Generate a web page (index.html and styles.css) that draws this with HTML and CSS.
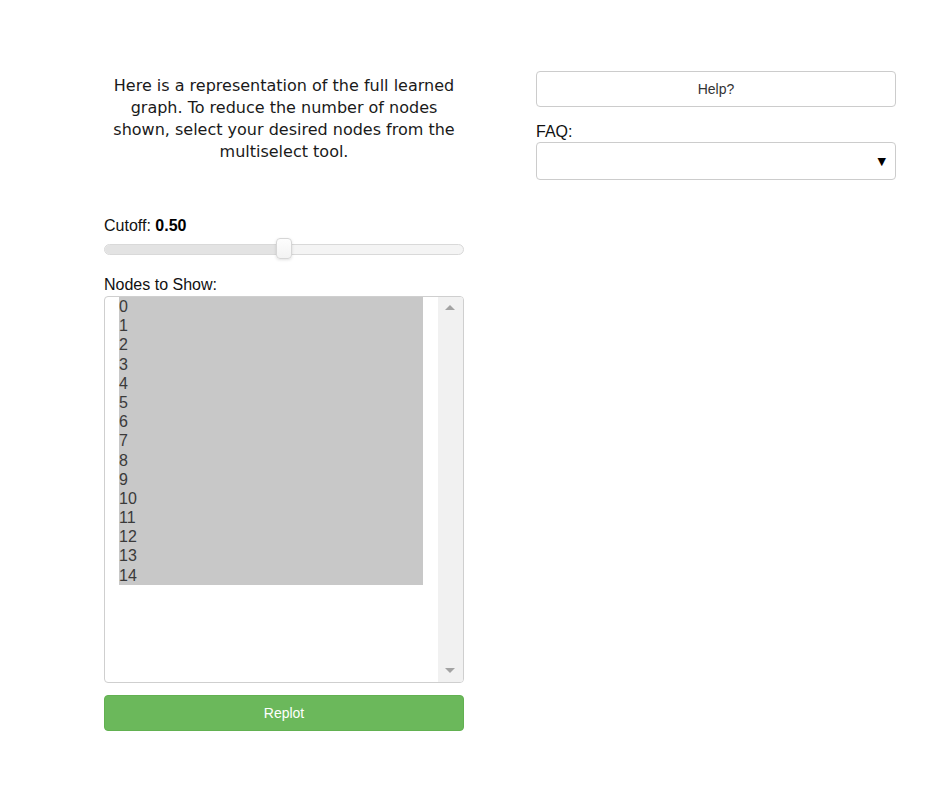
FILE: index.html
```html
<!DOCTYPE html>
<html>
<head>
<meta charset="utf-8">
<link rel="stylesheet" href="styles.css">
</head>
<body>
<div class="page">
  <div class="col left">
    <p class="desc">Here is a representation of the full learned graph. To reduce the number of nodes shown, select your desired nodes from the multiselect tool.</p>
    <div class="label cutoff">Cutoff: <b>0.50</b></div>
    <div class="slider">
      <div class="track"><div class="fill"></div></div>
      <div class="thumb"></div>
    </div>
    <div class="label nodes">Nodes to Show:</div>
    <div class="listbox">
      <div class="options">
        <div class="opt">0</div><div class="opt">1</div><div class="opt">2</div><div class="opt">3</div><div class="opt">4</div>
        <div class="opt">5</div><div class="opt">6</div><div class="opt">7</div><div class="opt">8</div><div class="opt">9</div>
        <div class="opt">10</div><div class="opt">11</div><div class="opt">12</div><div class="opt">13</div><div class="opt">14</div>
      </div>
      <div class="scrollbar">
        <span class="arrow up"></span>
        <span class="arrow down"></span>
      </div>
    </div>
    <button class="btn replot">Replot</button>
  </div>
  <div class="col right">
    <button class="btn help">Help?</button>
    <div class="label faq">FAQ:</div>
    <div class="select"><span class="caret">▼</span></div>
  </div>
</div>
</body>
</html>
```
FILE: styles.css
```css
html, body {
  margin: 0;
  padding: 0;
  background: #fff;
}
.page {
  display: flex;
  gap: 72px;
  padding: 71px 0 0 104px;
  font-family: "Liberation Sans", Arial, sans-serif;
  color: #222;
}
.col {
  width: 360px;
  display: flex;
  flex-direction: column;
}
.desc {
  margin: 4px 0 0;
  font-family: "DejaVu Sans", Verdana, sans-serif;
  font-size: 16px;
  line-height: 22px;
  text-align: center;
  color: #1a1a1a;
  padding: 0 4px;
}
.label {
  font-size: 16px;
  line-height: 18px;
  color: #111;
}
.cutoff {
  margin-top: 54px;
}
.cutoff b {
  font-weight: bold;
  color: #000;
}
.slider {
  position: relative;
  height: 21px;
  margin-top: 3px;
  display: flex;
  align-items: center;
}
.track {
  width: 100%;
  height: 11px;
  box-sizing: border-box;
  border: 1px solid #d9d9d9;
  border-radius: 6px;
  background: #f4f4f4;
  overflow: hidden;
  margin-top: 1px;
}
.fill {
  width: 50%;
  height: 100%;
  background: #e3e3e3;
}
.thumb {
  position: absolute;
  left: 172px;
  top: 0;
  width: 16px;
  height: 21px;
  box-sizing: border-box;
  border: 1px solid #d6d6d6;
  border-radius: 4px;
  background: linear-gradient(#fdfdfd, #f3f3f3);
  box-shadow: 0 1px 3px rgba(0,0,0,0.12);
}
.nodes {
  margin-top: 17px;
}
.listbox {
  margin-top: 2px;
  height: 387px;
  box-sizing: border-box;
  border: 1px solid #cfcfcf;
  border-radius: 4px;
  display: flex;
  overflow: hidden;
}
.options {
  flex: 1;
  padding: 0 15px 0 14px;
}
.opt {
  background: #c8c8c8;
  font-size: 16px;
  line-height: 19.2px;
  height: 19.2px;
  color: #3a3a3a;
}
.scrollbar {
  width: 25px;
  background: #f1f1f1;
  position: relative;
}
.arrow {
  position: absolute;
  left: 7px;
  width: 0;
  height: 0;
  border-left: 5px solid transparent;
  border-right: 5px solid transparent;
}
.arrow.up {
  top: 8px;
  border-bottom: 5px solid #a3a3a3;
}
.arrow.down {
  bottom: 9px;
  border-top: 5px solid #a3a3a3;
}
.btn {
  font-family: "Liberation Sans", Arial, sans-serif;
  font-size: 14px;
  height: 36px;
  border-radius: 4px;
  box-sizing: border-box;
  width: 100%;
  padding: 0;
  cursor: pointer;
}
.replot {
  margin-top: 12px;
  background: #6bb85b;
  border: 1px solid #62b151;
  color: #fff;
}
.help {
  background: #fff;
  border: 1px solid #cccccc;
  color: #333;
}
.faq {
  margin-top: 16px;
}
.select {
  margin-top: 1px;
  height: 38px;
  box-sizing: border-box;
  border: 1px solid #cccccc;
  border-radius: 4px;
  display: flex;
  align-items: center;
  justify-content: flex-end;
  padding-right: 9px;
}
.caret {
  font-family: "DejaVu Sans", sans-serif;
  font-size: 11px;
  color: #000;
}
```
